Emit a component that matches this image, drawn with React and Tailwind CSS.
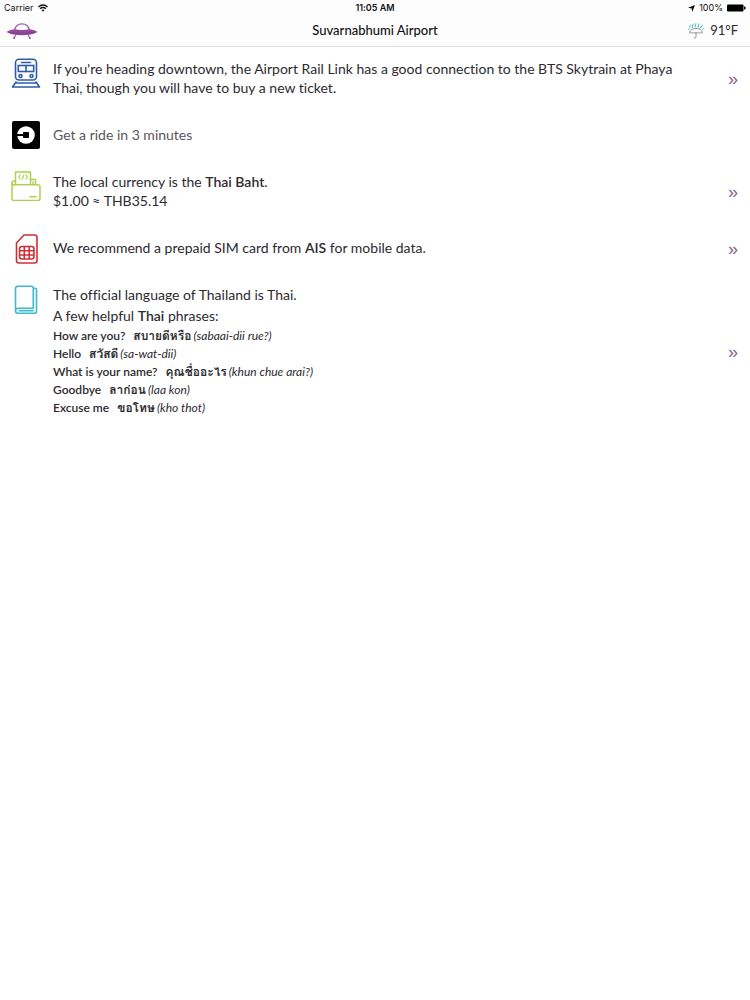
import React from 'react';

const phrases = [
  { english: 'How are you?', thai: 'สบายดีหรือ', sound: '(sabaai-dii rue?)' },
  { english: 'Hello', thai: 'สวัสดี', sound: '(sa-wat-dii)' },
  { english: 'What is your name?', thai: 'คุณชื่ออะไร', sound: '(khun chue arai?)' },
  { english: 'Goodbye', thai: 'ลาก่อน', sound: '(laa kon)' },
  { english: 'Excuse me', thai: 'ขอโทษ', sound: '(kho thot)' },
];

function WifiIcon() {
  return (
    <svg className="w-[10px] h-2" viewBox="0 0 20 16" fill="none" stroke="#111" strokeWidth="2.6">
      <path d="M1 6c5-5.3 13-5.3 18 0" />
      <path d="M4.300 9.500c3.200-3.400 8.200-3.400 11.400 0" />
      <path d="M10 15.500l-3-3.300c1.700-1.600 4.300-1.600 6 0z" fill="#111" stroke="none" />
    </svg>
  );
}

function UfoIcon() {
  return (
    <svg className="w-8 h-4" viewBox="0 0 32 16" fill="none">
      <path d="M8.500 7C9.500 3 12 .9 16 .9S22.500 3 23.500 7" stroke="#a35fa5" strokeWidth="1.300" />
      <path d="M.5 9C3 7.200 6.500 6.600 9 6.300c4 1 10 1 14 0 2.500.3 6 .9 8.500 2.700-3.500 2.400-9 3.300-15.500 3.300S4 11.400.5 9z" fill="#96489b" />
      <path d="M4 9.300c7 1.300 17 1.300 24 0" stroke="#7f3f91" strokeWidth="1" />
      <path d="M9.800 12l-1.600 2.800M22.200 12l1.600 2.800" stroke="#a35fa5" strokeWidth="1.200" />
      <circle cx="8.200" cy="15" r="1" fill="#96489b" />
      <circle cx="23.800" cy="15" r="1" fill="#96489b" />
    </svg>
  );
}

function WeatherIcon() {
  return (
    <svg className="w-4 h-4" viewBox="0 0 16 16" fill="none" strokeLinecap="round">
      <g stroke="#62c5c4" strokeWidth="1.100">
        <path d="M1.500 4l1-1.800M4.300 2.800l.8-1.800M7.200 2.200L8 .6M10.300 2.800l.8-1.800M13.300 4l1-1.800M4 5l.6-1.200M7 4.200l.5-1.200M9.800 4.300l.5-1.200M12 5.200l.5-1.200M.8 6.500l.5-.9M14.800 6.500l.4-.9" />
      </g>
      <path d="M1.500 9.500C2 6.800 4.700 5.500 8 5.500s6 1.300 6.500 4zM8 9.500v4.500c0 1.600-2 1.600-2 .2" stroke="#8f9292" strokeWidth=".9" />
    </svg>
  );
}

function TrainIcon() {
  return (
    <svg className="w-[30px] h-[30px]" viewBox="0 0 30 30" fill="none" stroke="#2e5ca8" strokeWidth="1.600" strokeLinecap="round">
      <rect x="4.500" y="1.200" width="21" height="20.800" rx="3.500" />
      <path d="M10.500 4.500h9" />
      <rect x="7.300" y="7.500" width="15.400" height="6" />
      <path d="M15 7.500v6" />
      <circle cx="9.500" cy="18" r="1.500" />
      <circle cx="20.500" cy="18" r="1.500" />
      <path d="M4.500 25h21M1.500 29h27M5 24l-3.500 5M25 24l3.500 5" />
    </svg>
  );
}

function RideIcon() {
  return (
    <svg className="w-[30px] h-[30px]" viewBox="0 0 30 30">
      <rect x="1" y="0" width="28" height="28" rx="2" fill="#000" />
      <circle cx="15" cy="14" r="8.800" fill="#fff" />
      <path d="M6 13h6v2H6z" fill="#000" />
      <rect x="12" y="11" width="6" height="6" rx=".8" fill="#000" />
    </svg>
  );
}

function WalletIcon() {
  return (
    <svg className="w-[30px] h-[30px]" viewBox="0 0 30 30" fill="none" stroke="#b0cf4b" strokeWidth="1.500" strokeLinecap="round" strokeLinejoin="round">
      <path d="M4.500 13V.9h15V13" />
      <path d="M19.500 8.500h5V13M4.500 10H3c-1.200 0-2 .8-2 2M22 11v2" />
      <path d="M1 12.200c0 1 .8 1.600 2 1.600h23.500c1.500 0 2.500.8 2.500 2V27.500c0 1.300-.8 2-2 2H3c-1.300 0-2-.7-2-2z" />
      <path d="M19 25.800h6" />
      <path d="M9.200 4L7.800 6l1.400 2M15 4l1.400 2L15 8M12.800 4l-1.400 4" strokeWidth="1.200" />
    </svg>
  );
}

function SimIcon() {
  return (
    <svg className="w-[30px] h-[30px]" viewBox="0 0 30 30" fill="none" stroke="#cc3038" strokeWidth="1.600" strokeLinejoin="round">
      <path d="M5.500 9L13 1h10.500C25 1 26 2 26 3.500v23c0 1.500-1 2.500-2.500 2.500H8c-1.500 0-2.500-1-2.500-2.500z" />
      <rect x="8.500" y="12.500" width="14.500" height="12.500" rx="2.500" />
      <path d="M8.500 16.800H23M8.500 21H23M13.300 12.500V25M18.200 12.500V25" />
    </svg>
  );
}

function BookIcon() {
  return (
    <svg className="w-[30px] h-[30px]" viewBox="0 0 30 30" fill="none" stroke="#3bb9d0" strokeWidth="1.600" strokeLinecap="round" strokeLinejoin="round">
      <path d="M4.500 27V4.500c0-1.500.8-2.300 2.300-2.300h13.500c1.200 0 2 .8 2 2v20H7.300C5.500 24.200 4.500 25.200 4.500 26.700s1 2.500 2.800 2.500h16.200c1.200 0 2-.8 2-2V6c0-1-.7-1.800-1.700-1.800" />
      <path d="M8 26.800h14.300" />
    </svg>
  );
}

function Row({ icon, multiline, link, children }) {
  return (
    <li className="flex pl-[11px] pr-3">
      <div className={multiline ? 'shrink-0 pt-[11px]' : 'shrink-0 pt-2'}>{icon}</div>
      <div className="flex-1 pl-3 pr-10 pt-3 pb-4 text-[14px] leading-[19px]">{children}</div>
      {link && (
        <a
          href="#details"
          aria-label={link}
          className="self-center pb-0.5 text-[18px] leading-5 text-[#80668a] font-['Liberation_Sans',sans-serif]"
        >
          »
        </a>
      )}
    </li>
  );
}

export default function App() {
  return (
    <div className="min-h-screen bg-white text-[#2d2a2f] font-[Lato,Loma,Waree,'Noto_Sans_Thai_Looped',sans-serif] [font-variant-ligatures:none]">
      <header className="border-b border-[#dedede] bg-[#fdfdfd]">
        {/* Device status */}
        <div className="grid grid-cols-3 items-center h-4 px-1 text-[9px] text-[#111] font-[Inter,sans-serif]">
          <div className="flex items-center gap-1">
            <span>Carrier</span>
            <WifiIcon />
          </div>
          <span className="text-center font-semibold">11:05 AM</span>
          <div className="flex items-center justify-end gap-1">
            <svg className="w-[7px] h-[7px]" viewBox="0 0 14 14" fill="#111">
              <path d="M14 0L8.500 14 7.300 6.800 0 5.600z" />
            </svg>
            <span>100%</span>
            <svg className="w-[19px] h-2" viewBox="0 0 19 8" fill="#000">
              <rect x="0" y=".5" width="16.500" height="7" rx="1" />
              <rect x="17" y="2.500" width="1.500" height="3" rx=".5" />
            </svg>
          </div>
        </div>

        {/* Title bar */}
        <div className="flex items-center h-[30px] pl-[6px] pr-3">
          <div className="flex flex-1 pr-[6px]">
            <button aria-label="Home">
              <UfoIcon />
            </button>
          </div>
          <h1 className="text-[13px] font-medium text-[#111] whitespace-nowrap">Suvarnabhumi Airport</h1>
          <div className="flex flex-1 items-center justify-end gap-1.5 text-[13px]">
            <WeatherIcon />
            <span>91°F</span>
          </div>
        </div>
      </header>

      <ul>
        <Row icon={<TrainIcon />} multiline link="Airport transport">
          If you're heading downtown, the Airport Rail Link has a good connection to the BTS Skytrain at Phaya Thai,
          though you will have to buy a new ticket.
        </Row>
        <Row icon={<RideIcon />}>
          <span className="text-[#59555b]">Get a ride in 3 minutes</span>
        </Row>
        <Row icon={<WalletIcon />} multiline link="Currency">
          <p>
            The local currency is the <b className="font-semibold">Thai Baht</b>.
          </p>
          <p>$1.00 ≈ THB35.14</p>
        </Row>
        <Row icon={<SimIcon />} link="Mobile data">
          We recommend a prepaid SIM card from <b className="font-semibold">AIS</b> for mobile data.
        </Row>
        <Row icon={<BookIcon />} multiline link="Language">
          <p>The official language of Thailand is Thai.</p>
          <p className="pt-0.5">
            A few helpful <b className="font-semibold">Thai</b> phrases:
          </p>
          <ul className="text-[12px] leading-[18px] pt-0.5">
            {phrases.map((phrase) => (
              <li key={phrase.english} className="flex">
                <b className="font-semibold pr-2">{phrase.english}</b>
                <b className="font-semibold pr-0.5" lang="th">{phrase.thai}</b>
                <i>{phrase.sound}</i>
              </li>
            ))}
          </ul>
        </Row>
      </ul>
    </div>
  );
}
